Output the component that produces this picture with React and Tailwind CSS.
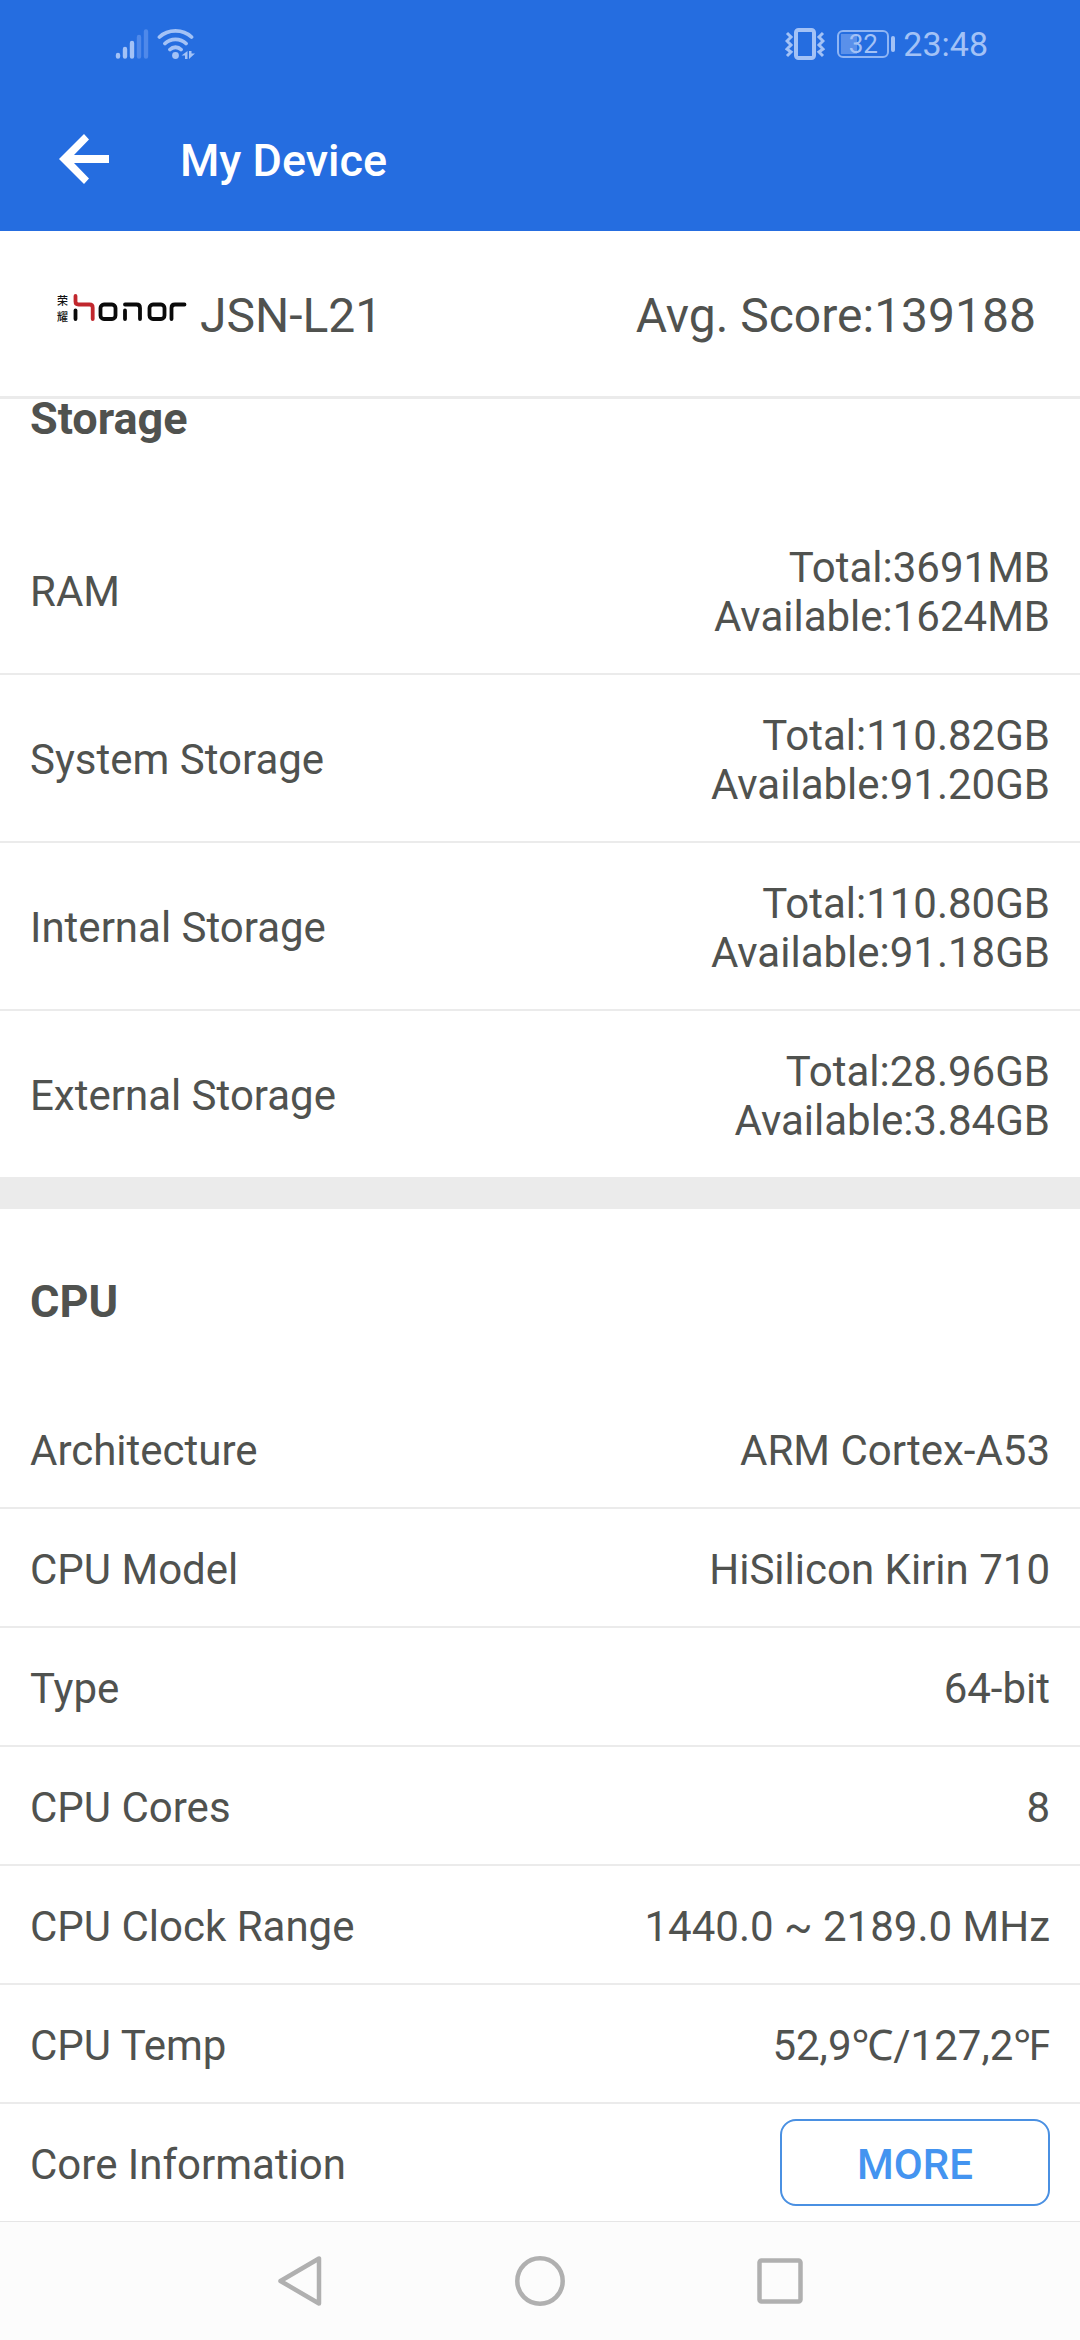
import React from "react";

const storage = [
  ["RAM", "Total:3691MB", "Available:1624MB"],
  ["System Storage", "Total:110.82GB", "Available:91.20GB"],
  ["Internal Storage", "Total:110.80GB", "Available:91.18GB"],
  ["External Storage", "Total:28.96GB", "Available:3.84GB"],
];

const cpu = [
  ["Architecture", "ARM Cortex-A53"],
  ["CPU Model", "HiSilicon Kirin 710"],
  ["Type", "64-bit"],
  ["CPU Cores", "8"],
  ["CPU Clock Range", "1440.0 ~ 2189.0 MHz"],
  ["CPU Temp", "52,9℃/127,2℉"],
];

function SignalIcon() {
  return (
    <svg width="34" height="32" viewBox="0 0 34 32" fill="none" stroke="#a3c2f6" strokeWidth="4.4" strokeLinecap="round" aria-hidden="true">
      <path d="M3 27v1.500M10 21v7.500M17 15v13.500" />
      <path d="M24 9v19.500M31 3.500v25" stroke="#4f89ea" />
    </svg>
  );
}

function WifiIcon() {
  return (
    <svg width="38" height="32" viewBox="0 0 38 32" fill="none" stroke="#a3c2f6" strokeWidth="3.8" strokeLinecap="round" aria-hidden="true">
      <path d="M2.500 9C11 .8 26 .8 34.500 9M8 15.500c5.500-5.500 15.500-5.500 21 0M13 21.500c3-3 8-3 11 0" />
      <circle cx="18.500" cy="27.500" r="3.400" fill="#a3c2f6" stroke="none" />
      <path d="M30.500 23v8H28v-3.500h-3.500zM32 31v-8h2.500v2.500H38z" fill="#a3c2f6" stroke="none" />
    </svg>
  );
}

function VibrateIcon() {
  return (
    <svg width="40" height="32" viewBox="0 0 40 32" fill="none" stroke="#a3c2f6" strokeWidth="3" aria-hidden="true">
      <rect x="11" y="2" width="18" height="28" rx="2.500" strokeWidth="4" />
      <path d="M2 5l4 4-4 4 4 4-4 4 4 3-4 4M38 5l-4 4 4 4-4 4 4 4-4 3 4 4" />
    </svg>
  );
}

function HonorLogo() {
  return (
    <svg width="132" height="48" viewBox="0 -4 132 48" role="img" aria-label="honor">
      <g fontSize="11" fontWeight="500" fill="#111" className="font-['Noto_Sans_CJK_SC',sans-serif]">
        <text x="1" y="11">荣</text>
        <text x="1" y="27">耀</text>
      </g>
      <g fill="none" strokeWidth="3.800" strokeLinecap="round" strokeLinejoin="round">
        <path d="M19.500 2v5.500q0 3 3 3H33.500q3.200 0 3.200 3.200V25" stroke="#c1272d" />
        <g stroke="#0a0a0a">
          <path d="M19.500 16.500V25" />
          <rect x="44.500" y="10.500" width="15" height="14.500" rx="3.500" />
          <path d="M69 16.500V25M69 10.500h11.500q3.500 0 3.500 3.500v11" />
          <rect x="93.500" y="10.500" width="15" height="14.500" rx="3.500" />
          <path d="M115.500 25V14q0-3.500 3.500-3.500H128.500" />
        </g>
      </g>
    </svg>
  );
}

export default function App() {
  return (
    <div className="flex min-h-screen flex-col bg-white font-['Roboto','Noto_Sans','Noto_Sans_CJK_SC',sans-serif] text-[42px] leading-[49px] text-[#50524f]">
      <header className="bg-[#256de0] text-white">
        <div className="flex h-[87px] items-center justify-between pr-[92px] pl-[115px] text-[#a3c2f6]">
          <div className="flex items-center gap-2">
            <SignalIcon />
            <WifiIcon />
          </div>
          <div className="flex items-center gap-2">
            <div className="flex items-center gap-3">
              <VibrateIcon />
              <div className="flex items-center gap-0.5">
                <div className="relative flex h-7 w-[52px] items-center justify-center rounded-md border-2 border-[#8fb5f4] text-[26px] leading-7">
                  <span className="absolute inset-y-0.5 left-0.5 w-4 bg-[#5a90ea]" />
                  <span className="relative">32</span>
                </div>
                <span className="h-4 w-1 rounded-sm bg-[#a3c2f6]" />
              </div>
            </div>
            <span className="text-[34px] leading-10">23:48</span>
          </div>
        </div>
        <div className="flex h-36 items-center gap-[71px] pl-[59px]">
          <button type="button" aria-label="Back">
            <svg width="50" height="50" viewBox="0 0 50 50" fill="#fff" aria-hidden="true">
              <path d="M0 25 25 0 30 5.500 15 21H50v8H15L30 44.500 25 50z" />
            </svg>
          </button>
          <h1 className="pt-0.5 text-[45px] leading-[53px] font-medium">My Device</h1>
        </div>
      </header>

      <section className="flex h-[168px] items-center justify-between border-b-3 border-[#ebebeb] pr-11 pl-14 text-5xl">
        <div className="flex items-center gap-3">
          <HonorLogo />
          <span className="pt-1">JSN-L21</span>
        </div>
        <span className="pt-1">Avg. Score:139188</span>
      </section>

      <main>
        <section>
          <h2 className="h-27 px-[30px] text-[45px] leading-10 font-bold">Storage</h2>
          <dl>
            {storage.map(([name, total, available]) => (
              <div key={name} className="flex min-h-[168px] items-center justify-between border-b-2 border-[#ebebeb] px-[30px] last:min-h-[166px] last:border-b-0">
                <dt className="pt-0.5">{name}</dt>
                <dd className="pt-1 text-right">
                  <p>{total}</p>
                  <p>{available}</p>
                </dd>
              </div>
            ))}
          </dl>
        </section>
        <section className="border-t-32 border-[#ebebeb]">
          <h2 className="flex h-[181px] items-center px-[30px] pt-1 text-[45px] font-bold">CPU</h2>
          <dl>
            {cpu.map(([name, value]) => (
              <div key={name} className="flex min-h-[119px] items-center justify-between border-b-2 border-[#ebebeb] px-[30px] pt-1">
                <dt>{name}</dt>
                <dd>{value}</dd>
              </div>
            ))}
            <div className="flex min-h-[117px] items-center justify-between px-[30px]">
              <dt className="pt-1">Core Information</dt>
              <dd className="flex">
                <button type="button" className="h-[87px] w-[270px] rounded-2xl border-2 border-[#4a90e2] pt-1 font-medium text-[#4494f0]">
                  MORE
                </button>
              </dd>
            </div>
          </dl>
        </section>
      </main>

      <nav className="mt-auto flex h-[119px] items-center justify-center gap-[190px] border-t border-[#e6e6e6] bg-[#fcfcfc]">
        <button type="button" aria-label="Back">
          <svg width="50" height="50" viewBox="0 0 50 50" fill="none" stroke="#b0b0b0" strokeWidth="4.500" strokeLinejoin="round" aria-hidden="true">
            <path d="M44 2.500V47.500L5.500 25z" />
          </svg>
        </button>
        <button type="button" aria-label="Home">
          <svg width="50" height="50" viewBox="0 0 50 50" fill="none" stroke="#b0b0b0" strokeWidth="4.500" aria-hidden="true">
            <circle cx="25" cy="25" r="22.700" />
          </svg>
        </button>
        <button type="button" aria-label="Recent apps">
          <svg width="50" height="50" viewBox="0 0 50 50" fill="none" stroke="#b0b0b0" strokeWidth="4.500" aria-hidden="true">
            <rect x="4.500" y="4.500" width="41" height="41" rx="2" />
          </svg>
        </button>
      </nav>
    </div>
  );
}
